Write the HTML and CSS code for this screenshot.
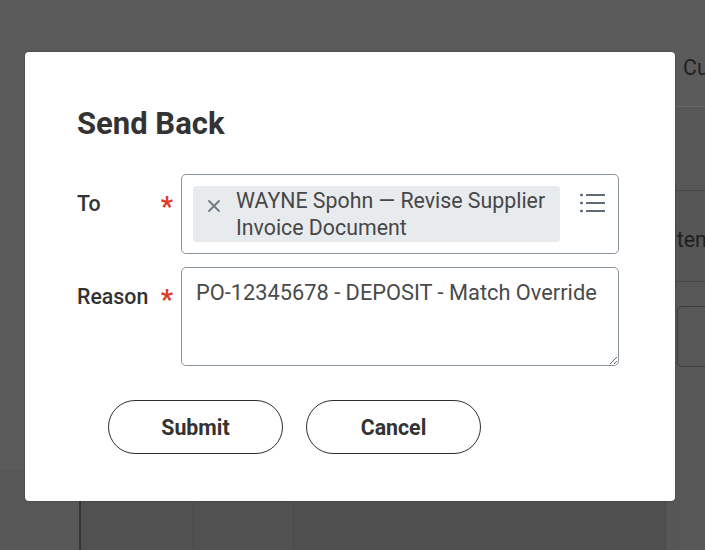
FILE: index.html
```html
<!DOCTYPE html>
<html>
<head>
<meta charset="utf-8">
<title>Send Back</title>
<link rel="stylesheet" href="styles.css">
</head>
<body>
<div class="page">
  <div class="main">
    <div class="main-top"></div>
    <div class="main-cols">
      <div class="col c1"></div>
      <div class="col c2"></div>
      <div class="col c3"></div>
      <div class="col c4"></div>
      <div class="col c5"></div>
    </div>
  </div>
  <div class="strip">
    <div class="cell head">Cu</div>
    <div class="cell row1"></div>
    <div class="cell row2"><span class="item">Item</span></div>
    <div class="cell row3"><div class="ghost-btn"></div></div>
  </div>

  <div class="dialog">
    <h1 class="title">Send Back</h1>
    <div class="form">
      <div class="label"><span class="label-text">To</span><span class="req">*</span></div>
      <div class="field to-field">
        <div class="chip">
          <svg class="chip-x" width="12" height="12" viewBox="0 0 12 12"><path d="M1 1L11 11M11 1L1 11" stroke="#6f7a85" stroke-width="1.8" stroke-linecap="round" fill="none"/></svg>
          <span class="chip-text">WAYNE Spohn — Revise Supplier Invoice Document</span>
        </div>
        <svg class="list-icon" width="27" height="20" viewBox="0 0 27 20">
          <g fill="#5f6b76"><rect x="1" y="0.8" width="3" height="2.4" rx="1"/><rect x="1" y="8.8" width="3" height="2.4" rx="1"/><rect x="1" y="16.8" width="3" height="2.4" rx="1"/></g>
          <g stroke="#5f6b76" stroke-width="2.2" fill="none"><path d="M7 2H26M7 10H26M7 18H26"/></g>
        </svg>
      </div>
      <div class="label"><span class="label-text">Reason</span><span class="req">*</span></div>
      <textarea class="field reason">PO-12345678 - DEPOSIT - Match Override</textarea>
    </div>
    <div class="actions">
      <button class="btn">Submit</button>
      <button class="btn">Cancel</button>
    </div>
  </div>
</div>
</body>
</html>
```

FILE: styles.css
```css
* { box-sizing: border-box; }
html, body { margin: 0; padding: 0; }
body {
  font-family: Roboto, "Liberation Sans", sans-serif;
  background: #5a5a5a;
}
.page {
  position: relative;
  width: 705px;
  height: 550px;
  overflow: hidden;
  display: flex;
  background: #5a5a5a;
}
.main {
  width: 675px;
  display: flex;
  flex-direction: column;
}
.main-top { flex: 0 0 470px; }
.main-cols {
  flex: 1;
  display: flex;
}
.col { height: 100%; }
.c1 { width: 79px; background: #575757; }
.c2 { width: 114px; background: #515151; border-left: 2px solid #353535; }
.c3 { width: 100px; background: #515151; border-left: 1px solid #4a4a4a; }
.c4 { width: 372px; background: #505050; border-left: 1px solid #4a4a4a; }
.c5 { width: 10px; background: #565656; border-left: 1px solid #4b4b4b; }

.strip {
  width: 30px;
  display: flex;
  flex-direction: column;
  overflow: hidden;
}
.cell { white-space: nowrap; }
.head {
  height: 107px;
  padding: 55px 0 0 8px;
  font-size: 21.33px;
  color: #1f1f1f;
  border-bottom: 1px solid #686868;
}
.row1 {
  height: 84px;
  background: #575757;
  border-bottom: 1px solid #474747;
}
.row2 {
  height: 91px;
  padding-top: 38px;
  background: #565656;
  border-bottom: 1px solid #474747;
  font-size: 21.33px;
  line-height: 22px;
  color: #1f1f1f;
}
.item { margin-left: -4px; }
.row3 {
  flex: 1;
  padding: 24px 0 0 2px;
  background: #575757;
}
.ghost-btn {
  width: 60px;
  height: 61px;
  border: 1px solid #3d3d3d;
  border-radius: 5px;
}

.dialog {
  position: absolute;
  left: 25px;
  top: 52px;
  width: 650px;
  height: 449px;
  background: #fff;
  border-radius: 4px;
  box-shadow: 0 0 2px rgba(0,0,0,0.35);
  padding: 53px 52px 0;
}
.title {
  margin: 0 0 31px;
  font-size: 31px;
  line-height: 38px;
  font-weight: 700;
  color: #333;
}
.form {
  display: grid;
  grid-template-columns: 104px 438px;
  row-gap: 13px;
}
.label {
  display: flex;
  justify-content: space-between;
  align-items: flex-start;
  padding: 17px 8px 0 0;
}
.label-text {
  font-size: 21.33px;
  line-height: 25px;
  font-weight: 500;
  color: #333;
}
.req {
  color: #de3a26;
  font-size: 27px;
  line-height: 27px;
  font-weight: 700;
  margin-top: 3px;
}
.field {
  border: 1px solid #8a949d;
  border-radius: 5px;
  background: #fff;
}
.to-field {
  height: 80px;
  padding: 11px;
  display: flex;
  align-items: flex-start;
}
.chip {
  width: 367px;
  height: 56px;
  flex: none;
  background: #e8ebee;
  border-radius: 3px;
  display: flex;
  align-items: flex-start;
  padding: 1px 8px 0 15px;
}
.chip-x {
  flex: none;
  margin: 13px 16px 0 0;
}
.chip-text {
  font-size: 21.33px;
  line-height: 27px;
  color: #474747;
}
.list-icon {
  flex: none;
  margin: 7px 0 0 19px;
}
.reason {
  display: block;
  margin: 0;
  width: 438px;
  height: 99px;
  padding: 11px 14px 6px;
  font-family: Roboto, "Liberation Sans", sans-serif;
  font-size: 21.8px;
  line-height: 27px;
  color: #4a4a4a;
  resize: vertical;
  outline: none;
}
.actions {
  display: flex;
  gap: 23px;
  margin-top: 34px;
  padding-left: 31px;
}
.btn {
  width: 175px;
  height: 54px;
  border: 1px solid #2e2e2e;
  border-radius: 27px;
  background: #fff;
  font-family: Roboto, "Liberation Sans", sans-serif;
  font-size: 21.33px;
  font-weight: 700;
  color: #333;
  padding: 0;
}
```
